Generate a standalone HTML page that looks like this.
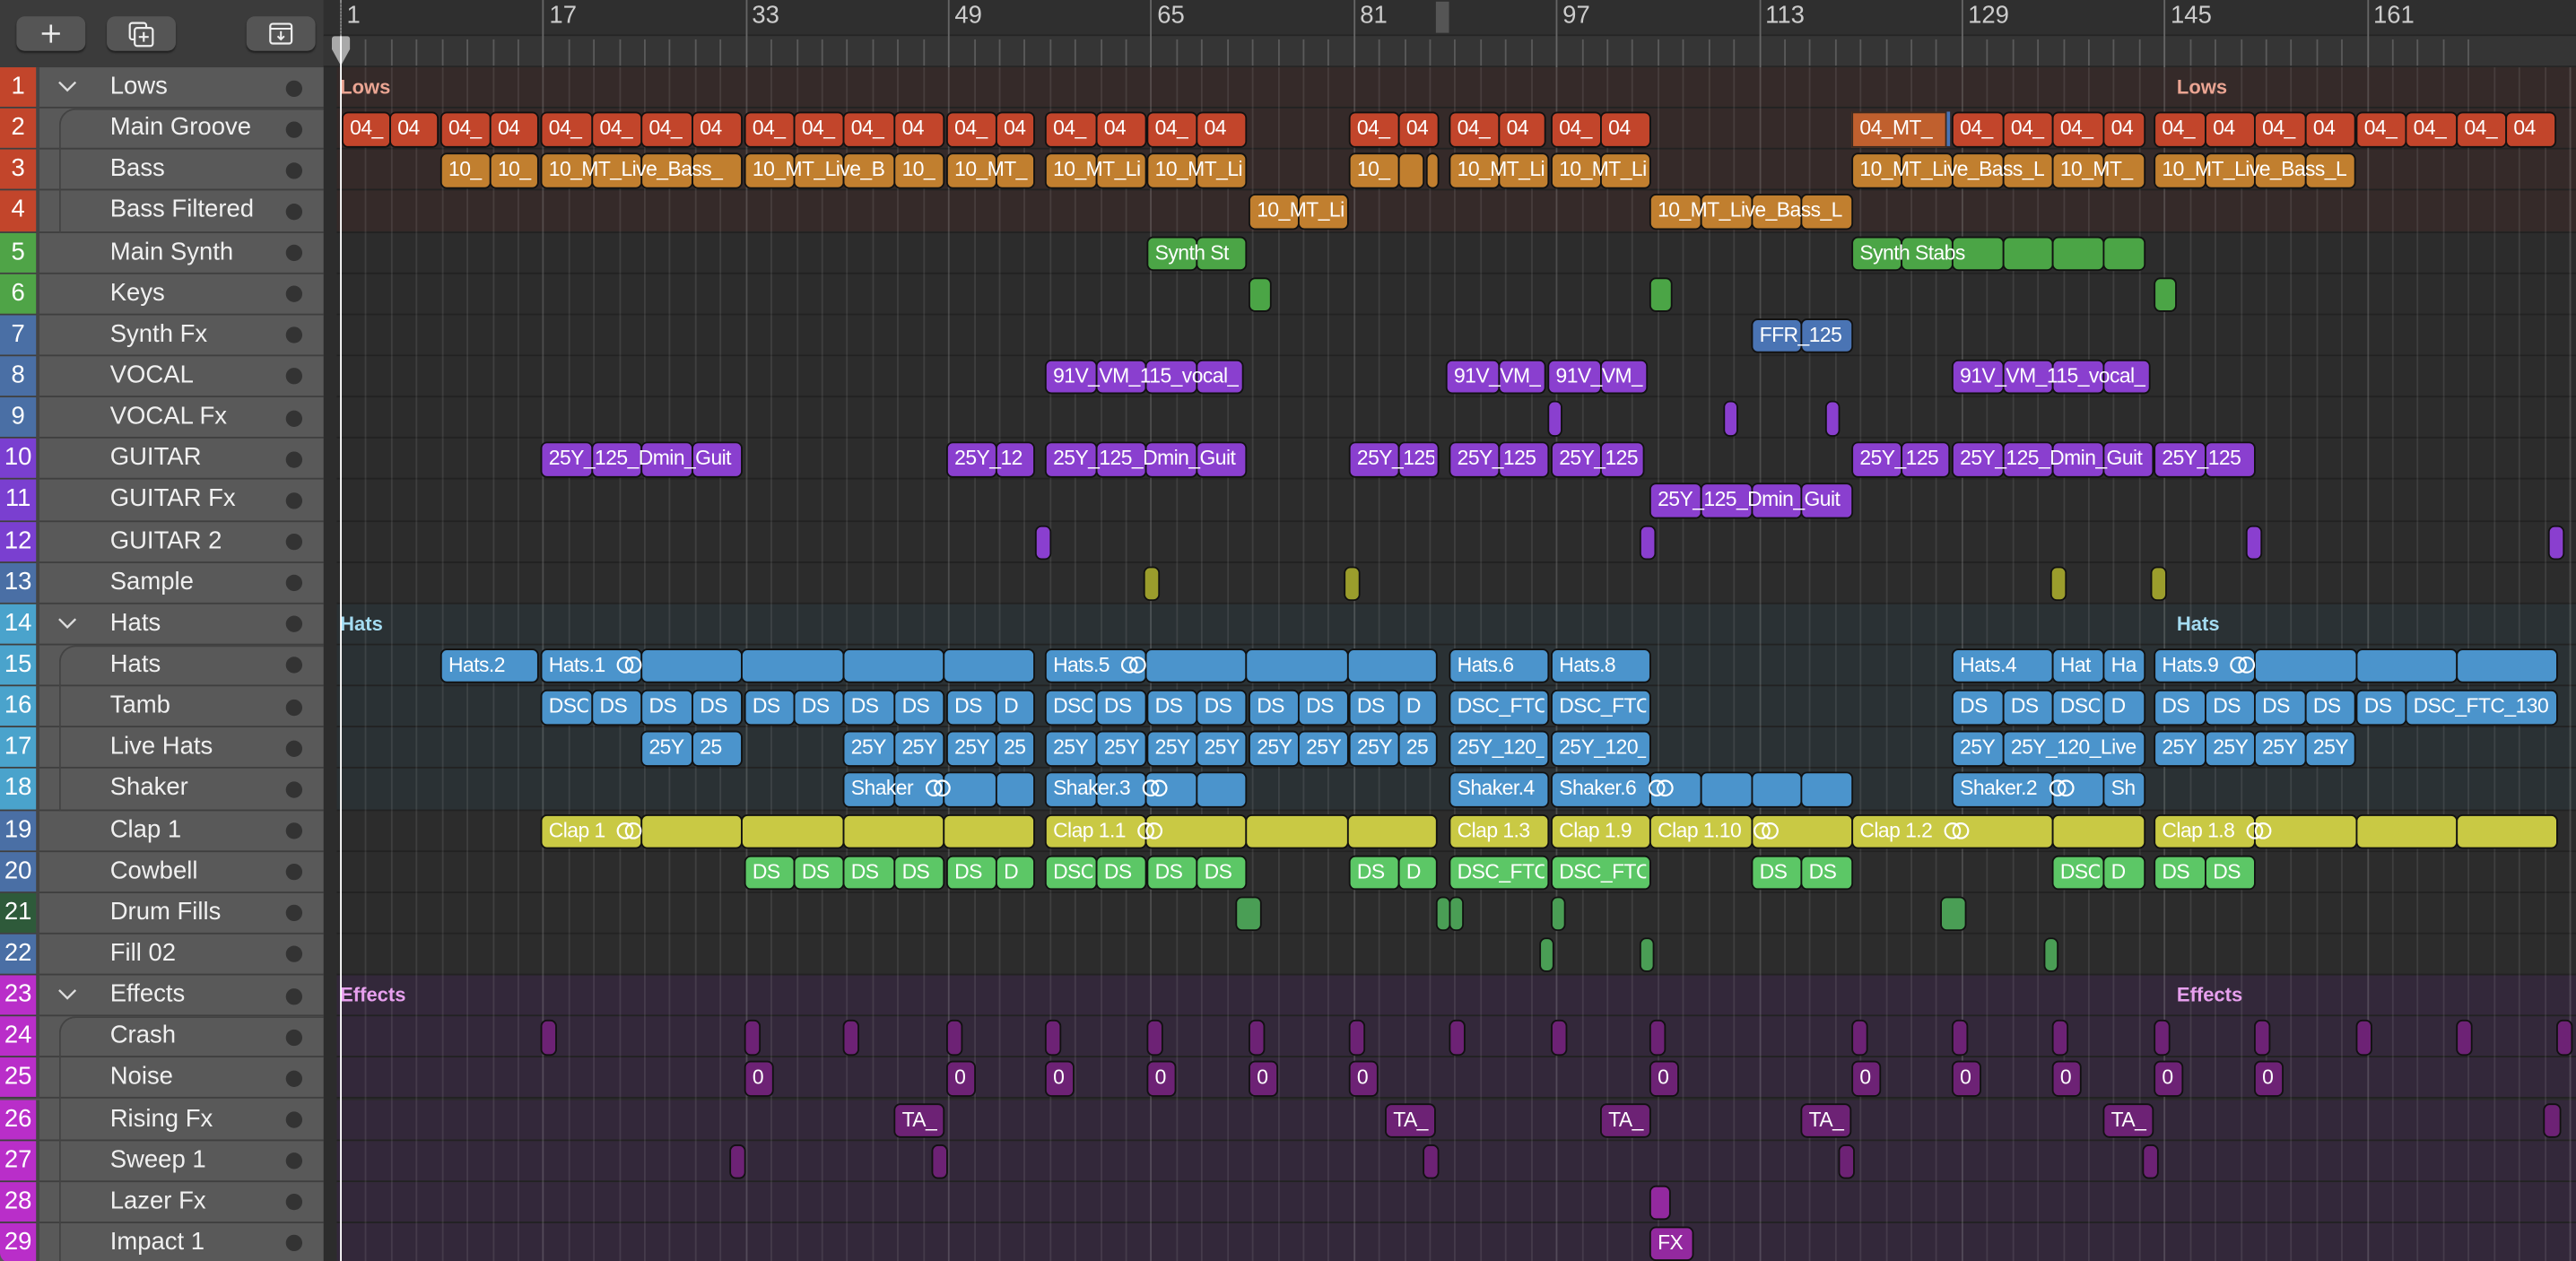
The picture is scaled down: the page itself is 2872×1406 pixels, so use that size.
<!DOCTYPE html>
<html><head><meta charset="utf-8">
<style>
html,body{margin:0;padding:0;background:#2b2b2b;overflow:hidden;width:2872px;height:1406px}
#w{position:absolute;left:0;top:0;width:1568px;height:768px;transform:scale(1.83163,1.83073);transform-origin:0 0;font-family:"Liberation Sans",sans-serif;background:#2b2b2b;overflow:hidden}
.a{position:absolute;box-sizing:border-box}
.r{position:absolute;box-sizing:border-box;border:1.3px solid #111;border-radius:4px}
.lb{position:absolute;box-sizing:border-box;color:#fff;font-size:12.5px;letter-spacing:-0.3px;line-height:21px;padding-left:5px;white-space:nowrap;overflow:hidden}
.tn{position:absolute;left:67px;color:#f0f0f0;font-size:15px}
.num{position:absolute;left:0;width:22px;color:#fff;font-size:15px;text-align:center}
.dot{position:absolute;left:174px;width:10px;height:10px;border-radius:5px;background:#333}
.btn{position:absolute;top:10px;width:42px;height:21px;background:#555;border-radius:5px;box-shadow:0 1px 1px #222}
</style></head><body><div id="w">
<div class="a" style="left:0;top:0;width:197px;height:41px;background:#3b3b3b"></div>
<div class="btn" style="left:10px"><svg width="42" height="21"><path d="M21 5v11M15.5 10.5h11" stroke="#eee" stroke-width="1.4"/></svg></div>
<div class="btn" style="left:65px"><svg width="42" height="21"><rect x="14" y="4" width="10" height="10" rx="1.5" fill="none" stroke="#eee" stroke-width="1.2"/><rect x="17" y="7" width="11" height="11" rx="1.5" fill="#555" stroke="#eee" stroke-width="1.2"/><path d="M22.5 9.5v6M19.5 12.5h6" stroke="#eee" stroke-width="1.2"/></svg></div>
<div class="btn" style="left:150px"><svg width="42" height="21"><rect x="14.5" y="4.5" width="13" height="12" rx="1.5" fill="none" stroke="#eee" stroke-width="1.2"/><path d="M14.5 7.5h13M21 9v5M19 12l2 2 2-2" stroke="#eee" stroke-width="1.1" fill="none"/></svg></div>
<div class="a" style="left:197px;top:0;width:1371px;height:41px;background:#2f2f2f"></div>
<div class="a" style="left:197px;top:21px;width:1371px;height:1px;background:#252525"></div>
<div class="a" style="left:197px;top:22px;width:1371px;height:19px;background:#353535"></div>
<div class="a" style="left:197px;top:40px;width:1371px;height:2px;background:#262626"></div>
<div class="a" style="left:874px;top:1px;width:8px;height:19px;background:#555"></div>
<div id="ruler" class="a" style="left:197px;top:0;width:1371px;height:41px"></div>
<div id="left" class="a" style="left:0;top:41px;width:197px;height:727px;background:#595959"></div>
<div class="a" style="left:197px;top:41px;width:8px;height:727px;background:#2c2c2c"></div>
<div id="tl" class="a" style="left:205px;top:41px;width:1363px;height:727px;overflow:hidden"></div>
<div class="a" style="left:207px;top:22px;width:1px;height:746px;background:#fff;z-index:9"></div>
<svg class="a" style="left:201px;top:22px;z-index:8" width="13" height="19"><path d="M1 2Q1 0 3 0H10Q12 0 12 2V8L6.5 18L1 8Z" fill="#a9a9a9"/></svg>
<div class="a" style="left:207px;top:0;width:0;height:22px;border-left:1px dotted #888"></div>
</div>
<script>
const W=document.getElementById('w'),L=document.getElementById('left'),T=document.getElementById('tl'),R=document.getElementById('ruler');
const RH=25.14,top0=41;function ry(i){return top0+(i-1)*RH}
function el(p,c,s,h){const d=document.createElement('div');d.className=c;d.style.cssText=s;if(h!=null)d.innerHTML=h;p.appendChild(d);return d}
for(let b=1;b<=170;b+=2){const x=207+(b-1)*7.71-197;if(x>1371)break;
 if((b-1)%16==0){el(R,'a',`left:${x}px;top:0;width:1px;height:41px;background:#666`);el(R,'a',`left:${x+4}px;top:1px;color:#ccc;font-size:15px`,String(b));}
 else el(R,'a',`left:${x}px;top:24px;width:1px;height:16px;background:#5a5a5a`);}
const names=['Lows','Main Groove','Bass','Bass Filtered','Main Synth','Keys','Synth Fx','VOCAL','VOCAL Fx','GUITAR','GUITAR Fx','GUITAR 2','Sample','Hats','Hats','Tamb','Live Hats','Shaker','Clap 1','Cowbell','Drum Fills','Fill 02','Effects','Crash','Noise','Rising Fx','Sweep 1','Lazer Fx','Impact 1'];
const nc=['#c2452b','#c2452b','#c2452b','#c2452b','#4fa447','#4fa447','#4a6fa5','#4a6fa5','#4a6fa5','#7a3fd0','#7a3fd0','#7a3fd0','#4a6fa5','#4aa3cc','#4aa3cc','#4aa3cc','#4aa3cc','#4aa3cc','#4a6fa5','#4a6fa5','#2e5a3a','#4a6fa5','#b92ec9','#b92ec9','#b92ec9','#b92ec9','#b92ec9','#b92ec9','#b92ec9'];
const groups={1:[4,'#352a29','Lows','#eba593'],14:[5,'#2a3134','Hats','#a4dcf2'],23:[7,'#33283a','Effects','#e7a0ee']};
const subs=[[2,4],[15,18],[24,29]];
for(let i=1;i<=29;i++){const y=ry(i)-top0;let bg='#2c2c2c';
 for(const g in groups){const s=+g,[n,c]=groups[g];if(i>=s&&i<s+n)bg=c;}
 el(T,'a',`left:0;top:${y}px;width:1363px;height:${RH}px;background:${bg};border-bottom:1px solid #222`);}
for(let b=1;b<=180;b+=2){const x=207+(b-1)*7.71-205;if(x>1363)break;el(T,'a',`left:${x}px;top:0;width:1px;height:727px;background:${(b-1)%16==0?'rgba(255,255,255,.16)':'rgba(255,255,255,.09)'}`);}
for(const g in groups){const [n,c,t,tc]=groups[g];const y=ry(+g)-top0;
 el(T,'a',`left:2px;top:${y+5}px;color:${tc};font-size:12px;font-weight:bold`,t);
 el(T,'a',`left:${1325-205}px;top:${y+5}px;color:${tc};font-size:12px;font-weight:bold`,t);}
for(let i=1;i<=29;i++){const y=ry(i)-top0;
 el(L,'a',`left:0;top:${y}px;width:197px;height:${RH}px;border-bottom:1.5px solid #3f3f3f`);
 el(L,'num',`top:${y}px;height:${RH-1}px;line-height:${RH-1}px;background:${nc[i-1]};${i==29?'border-bottom-left-radius:6px;':''}`,String(i));
 el(L,'a',`left:22px;top:${y}px;width:1.5px;height:${RH}px;background:#444`);
 el(L,'tn',`top:${y+3}px`,names[i-1]);
 el(L,'dot',`top:${y+7.5}px`);
 if(groups[i])el(L,'a',`left:34px;top:${y+4}px`,'<svg width="14" height="14"><path d="M2 5l5 5 5-5" stroke="#ddd" stroke-width="1.3" fill="none"/></svg>');}
for(const [a,b] of subs){const y=ry(a)-top0;el(L,'a',`left:36px;top:${y}px;width:162px;height:${(b-a+1)*RH}px;border-left:1.5px solid #434343;border-top:1.5px solid #434343;border-top-left-radius:10px`);}
const C={R:'#c2452b',O:'#c17f2f',G:'#4ba546',B:'#4a74b4',P:'#8a3fcf',OL:'#9b9d2c',H:'#4b94cc',Y:'#c9c944',CG:'#5cc766',DG:'#4a9e55',E:'#6d2275',E2:'#93299f'};
const loop='<svg width="18" height="12" style="vertical-align:-2px;margin-left:6px"><circle cx="6.5" cy="6" r="4.5" fill="none" stroke="#fff" stroke-width="1.2"/><circle cx="11.5" cy="6" r="4.5" fill="none" stroke="#fff" stroke-width="1.2"/></svg>';
function reg(row,x1,x2,label,col,segs,lp){const pts=[x1,...(segs||[]),x2];const y=ry(row)+2-top0;
 for(let k=0;k<pts.length-1;k++){const l=pts[k],w=pts[k+1]-l;
  el(T,'r',`left:${l-205}px;top:${y}px;width:${w+0.5}px;height:21.5px;background:${C[col]}`);}
 if(label)el(T,'lb',`left:${x1-205}px;top:${y}px;width:${x2-x1-2}px;height:21.5px`,label+(lp?loop:''));}
function seq(row,arr,col){for(const [a,b,l] of arr)reg(row,a,b,l,col);}
function small(row,xs,w,col,lab){for(const x of xs)reg(row,x,x+w,lab||'',col);}
seq(2,[[208,237,'04_'],[237,266,'04'],[268,298,'04_'],[298,327,'04'],[329,360,'04_'],[360,390,'04_'],[390,421,'04_'],[421,451,'04'],[453,483,'04_'],[483,513,'04_'],[513,544,'04_'],[544,574,'04'],[576,606,'04_'],[606,629,'04'],[636,667,'04_'],[667,697,'04'],[698,728,'04_'],[728,758,'04'],[821,851,'04_'],[851,875,'04'],[882,912,'04_'],[912,940,'04'],[944,974,'04_'],[974,1004,'04'],[1188,1219,'04_'],[1219,1249,'04_'],[1249,1280,'04_'],[1280,1305,'04'],[1311,1342,'04_'],[1342,1372,'04'],[1372,1403,'04_'],[1403,1433,'04'],[1434,1464,'04_'],[1464,1495,'04_'],[1495,1525,'04_'],[1525,1555,'04']],'R');
el(T,'r',`left:${1127-205}px;top:${ry(2)+2-top0}px;width:58px;height:21.5px;background:#c0602e;border-radius:0;border-color:#3a2a20`);
el(T,'lb',`left:${1127-205}px;top:${ry(2)+2-top0}px;width:58px;height:21.5px`,'04_MT_');
el(T,'a',`left:${1185-205}px;top:${ry(2)+2-top0}px;width:2px;height:21px;background:#4a74b4`);
reg(3,268,298,'10_','O');reg(3,298,327,'10_','O');reg(3,329,451,'10_MT_Live_Bass_','O',[360,390,421]);reg(3,453,544,'10_MT_Live_B','O',[483,513]);reg(3,544,574,'10_','O');reg(3,576,629,'10_MT_','O',[606]);reg(3,636,697,'10_MT_Li','O',[667]);reg(3,698,758,'10_MT_Li','O',[728]);reg(3,821,851,'10_','O');reg(3,851,866,'','O');reg(3,868,875,'','O');reg(3,882,942,'10_MT_Li','O',[912]);reg(3,944,1004,'10_MT_Li','O',[974]);reg(3,1127,1249,'10_MT_Live_Bass_L','O',[1157,1188,1219]);reg(3,1249,1305,'10_MT_','O',[1280]);reg(3,1311,1433,'10_MT_Live_Bass_L','O',[1342,1372,1403]);
reg(4,760,820,'10_MT_Li','O',[790]);reg(4,1004,1127,'10_MT_Live_Bass_L','O',[1035,1066,1096]);
reg(5,698,758,'Synth St','G',[728]);reg(5,1127,1305,'Synth Stabs','G',[1157,1188,1219,1249,1280]);
small(6,[760,1004,1311],13,'G');
reg(7,1066,1127,'FFR_125','B',[1096]);
reg(8,636,756,'91V_VM_115_vocal_','P',[667,697,728]);reg(8,880,940,'91V_VM_','P',[912]);reg(8,942,1002,'91V_VM_','P',[974]);reg(8,1188,1308,'91V_VM_115_vocal_','P',[1219,1249,1280]);
small(9,[942,1049,1111],8,'P');
reg(10,329,451,'25Y_125_Dmin_Guit','P',[360,390,421]);reg(10,576,629,'25Y_12','P',[606]);reg(10,636,758,'25Y_125_Dmin_Guit','P',[667,697,728]);reg(10,821,875,'25Y_125','P',[851]);reg(10,882,942,'25Y_125','P',[912]);reg(10,944,1000,'25Y_125','P',[974]);reg(10,1127,1186,'25Y_125','P',[1157]);reg(10,1188,1310,'25Y_125_Dmin_Guit','P',[1219,1249,1280]);reg(10,1311,1372,'25Y_125','P',[1342]);
reg(11,1004,1127,'25Y_125_Dmin_Guit','P',[1035,1066,1096]);
small(12,[630,998,1367,1551],9,'P');
small(13,[696,818,1248,1309],9,'OL');
reg(15,268,327,'Hats.2','H');reg(15,329,629,'Hats.1','H',[390,451,513,574],1);reg(15,636,874,'Hats.5','H',[697,758,820],1);reg(15,882,942,'Hats.6','H');reg(15,944,1004,'Hats.8','H');reg(15,1188,1249,'Hats.4','H');reg(15,1249,1280,'Hat','H');reg(15,1280,1305,'Ha','H');reg(15,1311,1556,'Hats.9','H',[1372,1434,1495],1);
seq(16,[[329,360,'DSC'],[360,390,'DS'],[390,421,'DS'],[421,451,'DS'],[453,483,'DS'],[483,513,'DS'],[513,544,'DS'],[544,574,'DS'],[576,606,'DS'],[606,629,'D'],[636,667,'DSC'],[667,697,'DS'],[698,728,'DS'],[728,758,'DS'],[760,790,'DS'],[790,820,'DS'],[821,851,'DS'],[851,874,'D'],[882,942,'DSC_FTC'],[944,1004,'DSC_FTC'],[1188,1219,'DS'],[1219,1249,'DS'],[1249,1280,'DSC'],[1280,1305,'D'],[1311,1342,'DS'],[1342,1372,'DS'],[1372,1403,'DS'],[1403,1433,'DS'],[1434,1464,'DS'],[1464,1556,'DSC_FTC_130']],'H');
seq(17,[[390,421,'25Y'],[421,451,'25'],[513,544,'25Y'],[544,574,'25Y'],[576,606,'25Y'],[606,629,'25'],[636,667,'25Y'],[667,697,'25Y'],[698,728,'25Y'],[728,758,'25Y'],[760,790,'25Y'],[790,820,'25Y'],[821,851,'25Y'],[851,874,'25'],[882,942,'25Y_120_'],[944,1004,'25Y_120_'],[1188,1219,'25Y'],[1219,1305,'25Y_120_Live'],[1311,1342,'25Y'],[1342,1372,'25Y'],[1372,1403,'25Y'],[1403,1433,'25Y']],'H');
reg(18,513,629,'Shaker','H',[544,574,606],1);reg(18,636,758,'Shaker.3','H',[667,697,728],1);reg(18,882,942,'Shaker.4','H');reg(18,944,1127,'Shaker.6','H',[1004,1035,1066,1096],1);reg(18,1188,1280,'Shaker.2','H',[1249],1);reg(18,1280,1305,'Sh','H');
reg(19,329,629,'Clap 1','Y',[390,451,513,574],1);reg(19,636,874,'Clap 1.1','Y',[697,758,820],1);reg(19,882,942,'Clap 1.3','Y');reg(19,944,1004,'Clap 1.9','Y');reg(19,1004,1127,'Clap 1.10','Y',[1066],1);reg(19,1127,1305,'Clap 1.2','Y',[1249],1);reg(19,1311,1556,'Clap 1.8','Y',[1372,1434,1495],1);
seq(20,[[453,483,'DS'],[483,513,'DS'],[513,544,'DS'],[544,574,'DS'],[576,606,'DS'],[606,629,'D'],[636,667,'DSC'],[667,697,'DS'],[698,728,'DS'],[728,758,'DS'],[821,851,'DS'],[851,874,'D'],[882,942,'DSC_FTC'],[944,1004,'DSC_FTC'],[1066,1096,'DS'],[1096,1127,'DS'],[1249,1280,'DSC'],[1280,1305,'D'],[1311,1342,'DS'],[1342,1372,'DS']],'CG');
reg(21,752,767,'','DG');small(21,[874,882,944],8,'DG');reg(21,1181,1196,'','DG');
small(22,[937,998,1244],8,'DG');
small(24,[329,453,513,576,636,698,760,821,882,944,1004,1127,1188,1249,1311,1372,1434,1495,1556],9,'E');
small(25,[453,576,636,698,760,821,1004,1127,1188,1249,1311,1372],17,'E','0');
small(26,[544,843,974,1096,1280],30,'E','TA_');reg(26,1548,1558,'','E');
small(27,[444,567,866,1119,1304],9,'E');
reg(28,1004,1016,'','E2');
reg(29,1004,1030,'FX','E2');
</script>
</body></html>
